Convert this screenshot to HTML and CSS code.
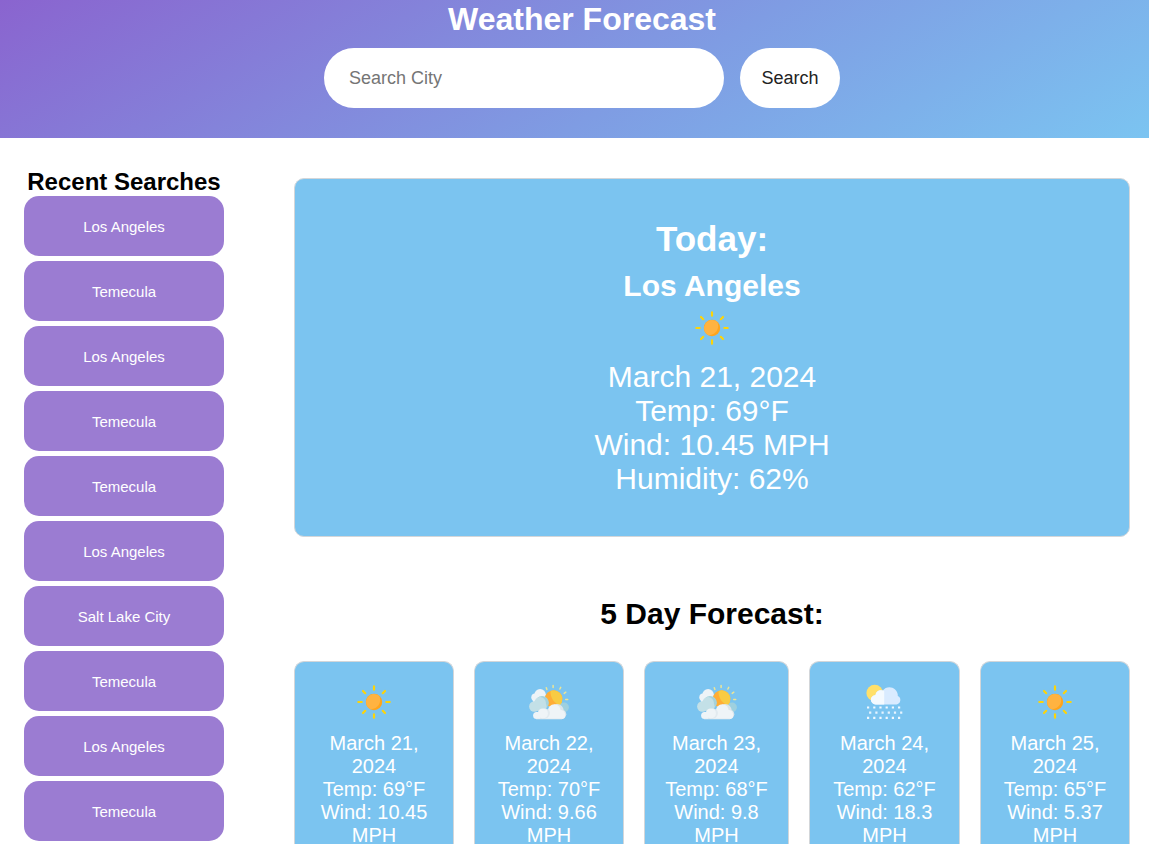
FILE: index.html
```html
<!DOCTYPE html>
<html lang="en">
<head>
<meta charset="utf-8">
<title>Weather Forecast</title>
<link rel="stylesheet" href="styles.css">
</head>
<body>
<svg class="sprite" aria-hidden="true">
  <symbol id="sun" viewBox="0 0 64 54">
    <path d="M32 12.300v3.400M32 40.300v3.400M16.300 28h3.400M44.300 28h3.400M21 17l2.200 2.200M40.800 36.800l2.200 2.200M21 39l2.200-2.200M40.800 19.200l2.200-2.200" stroke="#fcd40a" stroke-width="2.200" stroke-linecap="round"/>
    <circle cx="32" cy="28" r="8.200" fill="#ffa41b"/>
    <path d="M37 21.500a8.200 8.200 0 1 0-8.800 13.800c5.600 0 10-4.200 10-9.300 0-1.700-.4-3.200-1.200-4.500z" fill="#ffb341"/>
  </symbol>
  <symbol id="partly" viewBox="0.900 -0.800 64 54">
    <path d="M30.200 13l.6 1.600M37 10.800v1.800M44.600 12.600l-.8 1.600M49.700 17.400l-1.600 1.200M49.600 24.600h2" stroke="#ece596" stroke-width="1.500" stroke-linecap="round"/>
    <g fill="#eef3f7">
      <circle cx="24" cy="20" r="5.800"/>
      <circle cx="19" cy="22.500" r="3.800"/>
      <circle cx="19.500" cy="25" r="3"/>
    </g>
    <circle cx="37.500" cy="24.200" r="8.700" fill="#ffad36"/>
    <path d="M34.500 16.100a8.700 8.700 0 0 1 11.300 10.800c-.4 2.200-1 3.400-1.600 3.900-5.500-1.800-10.500-8-9.700-14.700z" fill="#f8cb43"/>
    <circle cx="48" cy="32.500" r="4.800" fill="#9ed0df"/>
    <circle cx="26" cy="28" r="6.800" fill="#a5d2dc"/>
    <g fill="#c3e0e7">
      <circle cx="24" cy="28" r="5.800"/>
      <circle cx="18.200" cy="31.700" r="5.200"/>
      <circle cx="25" cy="31.500" r="5.500"/>
    </g>
    <g fill="#dce5eb">
      <circle cx="41" cy="35.800" r="6.600"/>
      <circle cx="45.500" cy="39.500" r="4.700"/>
    </g>
    <g fill="#eff4f7">
      <circle cx="38.200" cy="36" r="6.500"/>
      <circle cx="44.500" cy="39.700" r="4.500"/>
      <rect x="17" y="37.200" width="32" height="7" rx="3.500"/>
    </g>
    <path d="M29 33.800c4 .3 5.500 3.200 4.600 6-.7 2.600-3 4.400-5.600 4.400h-4V35z" fill="#e2eaef"/>
    <circle cx="26.800" cy="38.600" r="5" fill="#eff4f7"/>
    <path d="M20 44.200h26" stroke="#dce5eb" stroke-width=".6"/>
  </symbol>
  <symbol id="rain" viewBox="0.800 -0.800 64 54">
    <circle cx="22.500" cy="18.200" r="8.300" fill="#ffe06a"/>
    <path d="M23.500 29.600a4.800 4.800 0 0 1-4.300-7 4.800 4.800 0 0 1 4.100-2.500c.4-3.900 4-5.600 7.300-4.300 2.600-3.800 8.600-4.500 12.300-1.200 2 1.800 3 4.500 2.700 6.700a4.400 4.400 0 0 1-1 8.300z" fill="#d9ebff"/>
    <path d="M32 29.600h-8.500a4.800 4.800 0 0 1-4.300-7 4.800 4.800 0 0 1 4.100-2.500c.4-4 4.900-6 8.700-3.900z" fill="#f4faff"/>
    <path d="M14.800 32.700h34M14.800 43h34" stroke="#f1f9ff" stroke-width="2.200" stroke-dasharray="2.200 4"/>
    <path d="M16.900 37.900h34" stroke="#e6f4ff" stroke-width="2.200" stroke-dasharray="2.200 4"/>
  </symbol>
</svg>

<header class="header">
  <h1 class="header-title">Weather Forecast</h1>
  <form class="search">
    <input class="search-input" type="text" placeholder="Search City">
    <button class="search-button" type="button">Search</button>
  </form>
</header>

<div class="layout">
  <aside class="recent">
    <h2 class="recent-title">Recent Searches</h2>
    <div class="recent-list">
      <button class="recent-item">Los Angeles</button>
      <button class="recent-item">Temecula</button>
      <button class="recent-item">Los Angeles</button>
      <button class="recent-item">Temecula</button>
      <button class="recent-item">Temecula</button>
      <button class="recent-item">Los Angeles</button>
      <button class="recent-item">Salt Lake City</button>
      <button class="recent-item">Temecula</button>
      <button class="recent-item">Los Angeles</button>
      <button class="recent-item">Temecula</button>
    </div>
  </aside>

  <main class="main">
    <section class="today">
      <h2 class="today-title">Today:</h2>
      <h3 class="today-city">Los Angeles</h3>
      <svg class="icon"><use href="#sun"/></svg>
      <p>March 21, 2024</p>
      <p>Temp: 69°F</p>
      <p>Wind: 10.45 MPH</p>
      <p>Humidity: 62%</p>
    </section>

    <h2 class="forecast-title">5 Day Forecast:</h2>
    <section class="forecast">
      <article class="card"><svg class="icon"><use href="#sun"/></svg><p>March 21, 2024</p><p>Temp: 69°F</p><p>Wind: 10.45 MPH</p></article>
      <article class="card"><svg class="icon"><use href="#partly"/></svg><p>March 22, 2024</p><p>Temp: 70°F</p><p>Wind: 9.66 MPH</p></article>
      <article class="card"><svg class="icon"><use href="#partly"/></svg><p>March 23, 2024</p><p>Temp: 68°F</p><p>Wind: 9.8 MPH</p></article>
      <article class="card"><svg class="icon"><use href="#rain"/></svg><p>March 24, 2024</p><p>Temp: 62°F</p><p>Wind: 18.3 MPH</p></article>
      <article class="card"><svg class="icon"><use href="#sun"/></svg><p>March 25, 2024</p><p>Temp: 65°F</p><p>Wind: 5.37 MPH</p></article>
    </section>
  </main>
</div>
</body>
</html>
```
FILE: styles.css
```css
* {
  box-sizing: border-box;
  margin: 0;
  padding: 0;
}

body {
  height: 844px;
  overflow: hidden;
  background: #fff;
  color: #000;
  font-family: Arial, "Liberation Sans", sans-serif;
}

.sprite {
  display: none;
}

.header {
  display: flex;
  flex-direction: column;
  align-items: center;
  gap: 9px;
  height: 138px;
  padding-left: 15px;
  background: linear-gradient(150deg, #8a64cf, #7f9ce3 57%, #7bc4f1);
}

.header-title {
  color: #fff;
  font-size: 32px;
  line-height: 39px;
}

.search {
  display: flex;
  gap: 16px;
}

.search-input,
.search-button {
  height: 60px;
  border: none;
  border-radius: 30px;
  background: #fff;
  font-family: inherit;
  font-size: 18px;
}

.search-input {
  width: 400px;
  padding: 0 25px;
}

.search-input::placeholder {
  color: #757575;
}

.search-button {
  width: 100px;
  color: #222;
}

.layout {
  display: flex;
  gap: 70px;
  height: 706px;
  padding: 0 19px 0 24px;
}

.recent {
  width: 200px;
  padding-top: 30px;
}

.recent-title {
  font-size: 24px;
  line-height: 28px;
  text-align: center;
  white-space: nowrap;
}

.recent-list {
  display: grid;
  gap: 5px;
}

.recent-item {
  height: 60px;
  border: none;
  border-radius: 15px;
  background: #9b7cd2;
  color: #fff;
  font-family: inherit;
  font-size: 15px;
}

.main {
  flex: 1;
  padding-top: 40px;
}

.today,
.card {
  border: 1px solid #d3d6d9;
  border-radius: 10px;
  background: #7bc4f0;
  color: #fff;
  text-align: center;
}

.today {
  height: 359px;
  padding-top: 40px;
  font-size: 30px;
  line-height: 34px;
}

.today-title {
  font-size: 35px;
  line-height: 40px;
}

.today-city {
  margin-top: 10px;
  font-size: 30px;
  line-height: 34px;
}

.icon {
  display: block;
  width: 64px;
  height: 54px;
  margin: 0 auto;
}

.today .icon {
  margin: -3px auto 6px;
}

.forecast-title {
  margin: 60px 0 31px;
  font-size: 30px;
  line-height: 33px;
  text-align: center;
}

.forecast {
  display: grid;
  grid-template-columns: 160fr 150fr 145fr 151fr 150fr;
  gap: 20px;
}

.card {
  height: 183px;
  padding: 12px 20px 0;
  border-bottom: none;
  border-radius: 10px 10px 0 0;
  font-size: 20px;
  line-height: 23px;
}

.card .icon {
  margin-bottom: 4px;
}
```
